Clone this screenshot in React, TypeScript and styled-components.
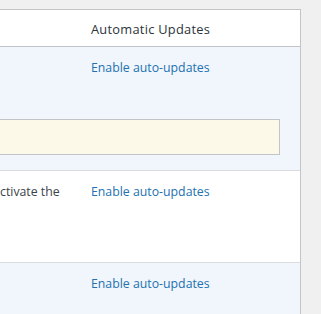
import styled, { createGlobalStyle } from "styled-components";

const GlobalStyle = createGlobalStyle`
  html, body {
    margin: 0;
    padding: 0;
    background: #f0f0f1;
  }

  body {
    font-family: "Open Sans", "Noto Sans", Arial, sans-serif;
    font-size: 12.3px;
    color: #3c434a;
  }
`;

const PLUGINS = [
  { id: 1, description: "", active: true, hasUpdate: true, height: 67 },
  { id: 2, description: "ctivate the", active: false, hasUpdate: false, height: 92 },
  { id: 3, description: "", active: true, hasUpdate: false, height: 60 },
];

export default function App() {
  return (
    <>
      <GlobalStyle />
      <Page>
        <Table>
          <colgroup>
            <col style={{ width: 81 }} />
            <col />
          </colgroup>
          <thead>
            <tr>
              <HeadCell />
              <HeadCell>Automatic Updates</HeadCell>
            </tr>
          </thead>
          <tbody>
            {PLUGINS.map((plugin) => (
              <PluginGroup key={plugin.id} plugin={plugin} />
            ))}
          </tbody>
        </Table>
      </Page>
    </>
  );
}

type Plugin = (typeof PLUGINS)[number];

function PluginGroup({ plugin }: { plugin: Plugin }) {
  return (
    <>
      <Row $active={plugin.active} $last={!plugin.hasUpdate}>
        <DescCell style={{ height: plugin.height }}>{plugin.description}</DescCell>
        <Cell>
          <Link href="#">Enable auto-updates</Link>
        </Cell>
      </Row>
      {plugin.hasUpdate && (
        <Row $active={plugin.active} $last>
          <UpdateCell colSpan={2}>
            <Notice />
          </UpdateCell>
        </Row>
      )}
    </>
  );
}

const Page = styled.div`
  padding-top: 9px;
  width: 301px;
`;

const Table = styled.table`
  width: 301px;
  table-layout: fixed;
  border-collapse: separate;
  border-spacing: 0;
  background: #fff;
  border-top: 1px solid #c3c4c7;
  border-right: 1px solid #c3c4c7;
`;

const HeadCell = styled.th`
  height: 37px;
  padding: 1px 10px 0;
  border-bottom: 1px solid #c3c4c7;
  color: #2c3338;
  font-size: 12.8px;
  font-weight: 400;
  letter-spacing: 0.28px;
  text-align: left;
  line-height: 18px;
  box-sizing: border-box;
`;

const Row = styled.tr<{ $active: boolean; $last: boolean }>`
  background: ${({ $active }) => ($active ? "#f0f6fc" : "#fff")};

  & > td {
    border-bottom: ${({ $last }) => ($last ? "1px solid #dcdcde" : "none")};
  }
`;

const Cell = styled.td`
  vertical-align: top;
  padding: 11px 10px 10px;
  line-height: 19px;
`;

const DescCell = styled(Cell)`
  padding-left: 0;
  padding-right: 25px;
  text-align: right;
  white-space: nowrap;
  overflow: hidden;
  box-sizing: border-box;
`;

const UpdateCell = styled.td`
  padding: 0;
`;

const Notice = styled.div`
  height: 34px;
  margin: 5px 20px 15px 0;
  background: #fcf9e8;
  border: 1px solid #c3c4c7;
  border-left: none;
`;

const Link = styled.a`
  color: #2271b1;
  text-decoration: none;
`;
